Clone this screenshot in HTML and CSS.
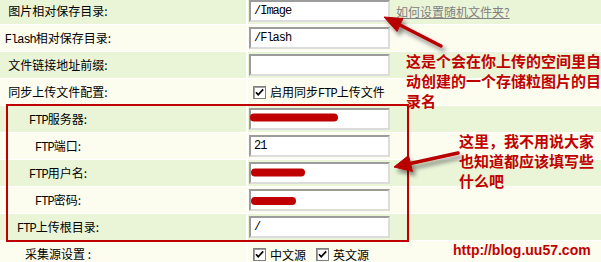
FILE: index.html
```html
<!DOCTYPE html>
<html lang="zh-CN">
<head>
    <meta charset="UTF-8">
    <title>FTP 上传设置</title>
    <link rel="stylesheet" href="styles.css">
</head>
<body>
<div class="page">
    <div class="form">
        <div class="row g">
            <div class="label">图片相对保存目录:</div>
            <div class="value"><input type="text" value="/Image"><a href="#" class="help">如何设置随机文件夹?</a></div>
        </div>
        <div class="row c">
            <div class="label"><span class="en">Flash</span>相对保存目录:</div>
            <div class="value"><input type="text" value="/Flash"></div>
        </div>
        <div class="row g">
            <div class="label">文件链接地址前缀:</div>
            <div class="value"><input type="text" value=""></div>
        </div>
        <div class="row c">
            <div class="label">同步上传文件配置:</div>
            <div class="value checks">
                <svg class="cb" width="13" height="13" viewBox="0 0 13 13"><rect x="0.5" y="0.5" width="12" height="12" fill="#fff" stroke="#7f7f7f"/><path d="M1 1.5h11M1.5 1v11" stroke="#a0a0a0"/><path d="M3 6.2l2.2 2.6L10.2 3.4" stroke="#000" stroke-width="1.7" fill="none"/></svg>
                <span>启用同步<span class="en">FTP</span>上传文件</span>
            </div>
        </div>
        <div class="row g">
            <div class="label"><span class="en">FTP</span>服务器:</div>
            <div class="value"><input type="text" value=""></div>
        </div>
        <div class="row c">
            <div class="label"><span class="en">FTP</span>端口:</div>
            <div class="value"><input type="text" value="21"></div>
        </div>
        <div class="row g">
            <div class="label"><span class="en">FTP</span>用户名:</div>
            <div class="value"><input type="text" value=""></div>
        </div>
        <div class="row c">
            <div class="label"><span class="en">FTP</span>密码:</div>
            <div class="value"><input type="text" value=""></div>
        </div>
        <div class="row g">
            <div class="label"><span class="en">FTP</span>上传根目录:</div>
            <div class="value"><input type="text" value="/"></div>
        </div>
        <div class="row c">
            <div class="label">采集源设置 :</div>
            <div class="value checks">
                <svg class="cb" width="13" height="13" viewBox="0 0 13 13"><rect x="0.5" y="0.5" width="12" height="12" fill="#fff" stroke="#7f7f7f"/><path d="M1 1.5h11M1.5 1v11" stroke="#a0a0a0"/><path d="M3 6.2l2.2 2.6L10.2 3.4" stroke="#000" stroke-width="1.7" fill="none"/></svg>
                <span>中文源</span>
                <svg class="cb second" width="13" height="13" viewBox="0 0 13 13"><rect x="0.5" y="0.5" width="12" height="12" fill="#fff" stroke="#7f7f7f"/><path d="M1 1.5h11M1.5 1v11" stroke="#a0a0a0"/><path d="M3 6.2l2.2 2.6L10.2 3.4" stroke="#000" stroke-width="1.7" fill="none"/></svg>
                <span>英文源</span>
            </div>
        </div>
    </div>

    <!-- 标注：红框、箭头、涂抹 -->
    <div class="ftp-box"></div>

    <svg class="marks" width="601" height="262" viewBox="0 0 601 262">
        <defs>
            <filter id="shadow" x="-20%" y="-40%" width="160%" height="200%">
                <feDropShadow dx="3" dy="4" stdDeviation="2" flood-color="#000" flood-opacity="0.45"/>
            </filter>
        </defs>
        <g filter="url(#shadow)" fill="#b80000" stroke="#b80000">
            <line x1="441" y1="46" x2="398" y2="24" stroke-width="3.5" stroke-linecap="round"/>
            <polygon points="384,17 403,18.5 397,31.5" stroke-width="1"/>
            <line x1="458" y1="153" x2="408" y2="164" stroke-width="3.5" stroke-linecap="round"/>
            <polygon points="394,167 408.5,155.5 412.5,171.5" stroke-width="1"/>
        </g>
        <g stroke="#c00000" stroke-width="8" stroke-linecap="round" fill="none">
            <line x1="254" y1="117.5" x2="334" y2="117.5"/>
            <line x1="255" y1="172.5" x2="301" y2="172.5"/>
            <line x1="255" y1="201" x2="292" y2="201"/>
        </g>
    </svg>

    <div class="note note-dir">这是个会在你上传的空间里自<br>动创建的一个存储粒图片的目<br>录名</div>
    <div class="note note-ftp">这里，我不用说大家<br>也知道都应该填写些<br>什么吧</div>
    <div class="site">http://blog.uu57.com</div>
</div>
</body>
</html>
```

FILE: styles.css
```css
body { margin: 0; background: #fff; font: 12px "Noto Sans CJK SC", sans-serif; color: #000; overflow: hidden; }
.page { position: relative; width: 601px; height: 262px; overflow: hidden; }

.form { margin-top: -2px; display: flex; flex-direction: column; gap: 1px; }
.row { display: flex; gap: 2px; height: 26px; }
.row.g > div { background: #eaf5d8; }
.row.c > div { background: #fcfdef; }
.label { width: 246px; flex: none; box-sizing: border-box; padding-right: 130px; text-align: center; line-height: 26px; white-space: nowrap; }
.value { flex: 1; display: flex; align-items: center; }
.en { font: 12px "Liberation Mono", monospace; letter-spacing: -1px; }

input[type="text"] {
    width: 141px; height: 22px; margin: 0 0 0 1px; padding: 0 3px; box-sizing: border-box;
    border: 2px solid; border-color: #9c9c9c #dcdcdc #dcdcdc #9c9c9c;
    background: #fff; font: 12px "Liberation Mono", monospace; letter-spacing: -1px; color: #000;
}
.help { margin-left: 6px; color: #808080; text-decoration: underline; }

.checks { padding-left: 5px; }
.cb { flex: none; margin-right: 4px; }
.cb.second { margin-left: 10px; }

.ftp-box { position: absolute; left: 6px; top: 104px; width: 403px; height: 138px; box-sizing: border-box; border: 2px solid #c00000; }
.marks { position: absolute; left: 0; top: 0; pointer-events: none; }

.note { position: absolute; color: #c00000; font: bold 15px/20px "Noto Sans CJK SC", sans-serif; white-space: nowrap; }
.note-dir { left: 406px; top: 51px; }
.note-ftp { left: 459px; top: 131px; }
.site { position: absolute; left: 453px; top: 242px; color: #c00000; font: bold 14px/16px "Liberation Sans", Arial, sans-serif; }
```
